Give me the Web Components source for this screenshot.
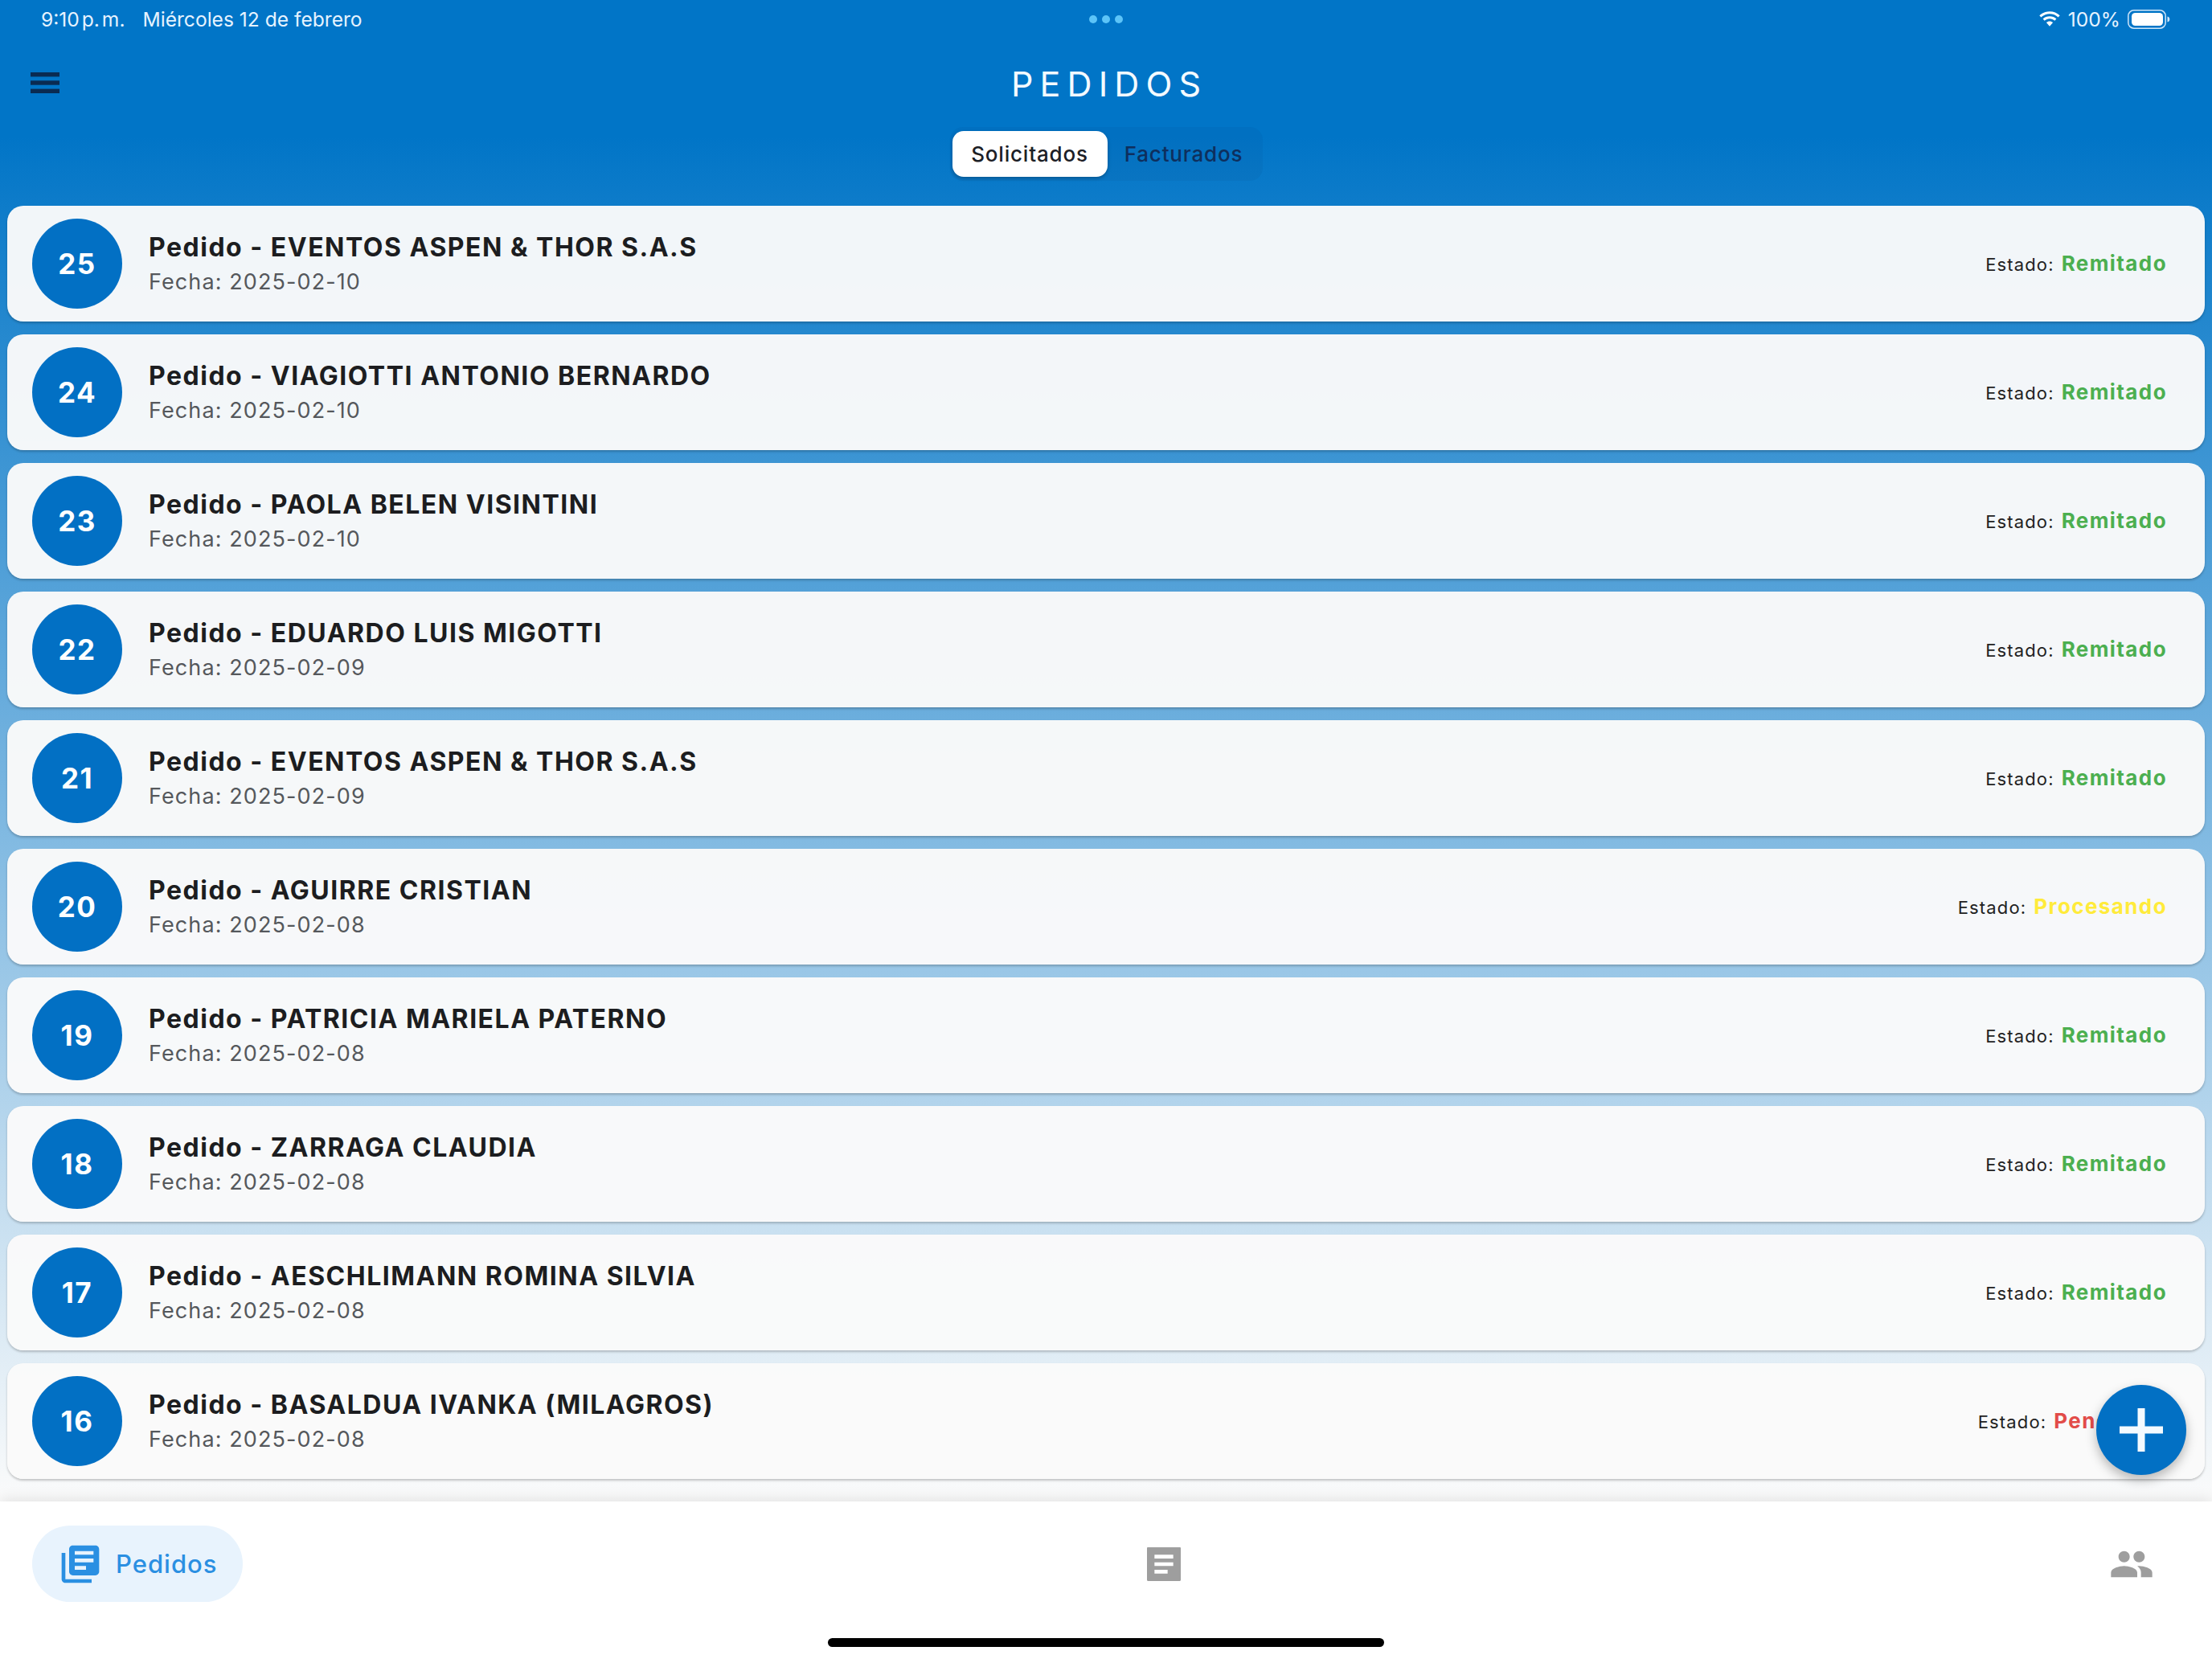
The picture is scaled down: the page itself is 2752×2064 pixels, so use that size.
<!DOCTYPE html>
<html lang="es">
<head>
<meta charset="utf-8">
<title>Pedidos</title>
<style>
html,body{margin:0;padding:0;width:2752px;height:2064px;overflow:hidden;font-family:Inter,Roboto,sans-serif}
</style>
</head>
<body>
<app-shell>
  <status-bar slot="top" time="9:10 p. m." date="Miércoles 12 de febrero" level="100%"></status-bar>
  <app-header slot="top" title="PEDIDOS"></app-header>
  <segmented-control slot="top">
    <seg-item active>Solicitados</seg-item>
    <seg-item>Facturados</seg-item>
  </segmented-control>
  <order-card num="25" name="EVENTOS ASPEN &amp; THOR S.A.S" date="2025-02-10" state="Remitado"></order-card>
  <order-card num="24" name="VIAGIOTTI ANTONIO BERNARDO" date="2025-02-10" state="Remitado"></order-card>
  <order-card num="23" name="PAOLA BELEN VISINTINI" date="2025-02-10" state="Remitado"></order-card>
  <order-card num="22" name="EDUARDO LUIS MIGOTTI" date="2025-02-09" state="Remitado"></order-card>
  <order-card num="21" name="EVENTOS ASPEN &amp; THOR S.A.S" date="2025-02-09" state="Remitado"></order-card>
  <order-card num="20" name="AGUIRRE CRISTIAN" date="2025-02-08" state="Procesando"></order-card>
  <order-card num="19" name="PATRICIA MARIELA PATERNO" date="2025-02-08" state="Remitado"></order-card>
  <order-card num="18" name="ZARRAGA CLAUDIA" date="2025-02-08" state="Remitado"></order-card>
  <order-card num="17" name="AESCHLIMANN ROMINA SILVIA" date="2025-02-08" state="Remitado"></order-card>
  <order-card num="16" name="BASALDUA IVANKA (MILAGROS)" date="2025-02-08" state="Pendiente"></order-card>
  <fab-button slot="fab"></fab-button>
  <bottom-nav slot="nav"></bottom-nav>
</app-shell>
<script>
function def(name, html){
  customElements.define(name, class extends HTMLElement{
    connectedCallback(){
      if(this.shadowRoot) return;
      const r=this.attachShadow({mode:'open'});
      r.innerHTML=typeof html==='function'?html(this):html;
    }
  });
}
const esc=s=>(s||'').replace(/&/g,'&amp;').replace(/</g,'&lt;');

def('app-shell',`<style>
:host{display:grid;grid-template-rows:auto 1fr auto;position:relative;width:2752px;height:2064px;overflow:hidden;
 background:linear-gradient(180deg,#0175c7 0,#0175c7 170px,#fbfbfb 1868px)}
.list{display:flex;flex-direction:column;gap:16px;padding:0 9px;min-height:0}
.fab{position:absolute;left:2608px;top:1723px;z-index:3}
</style>
<div><slot name="top"></slot></div>
<div class="list"><slot></slot></div>
<slot name="nav"></slot>
<div class="fab"><slot name="fab"></slot></div>`);

def('status-bar',h=>`<style>
:host{display:grid;grid-template-columns:1fr auto 1fr;align-items:center;height:48px;padding:0 52px 0 51px;color:#e6f3ff;
 font:400 24.600px/1 Inter,Roboto,sans-serif}
.l{display:flex;gap:22px}
.d{display:flex;gap:6px}.d i{width:10px;height:10px;border-radius:50%;background:#5cc4f8}
.r{display:flex;justify-content:flex-end;align-items:center;gap:9px}
svg{display:block}
.time{word-spacing:-4px}
</style>
<div class="l"><span class="time">${esc(h.getAttribute('time'))}</span><span>${esc(h.getAttribute('date'))}</span></div>
<div class="d"><i></i><i></i><i></i></div>
<div class="r">
<svg width="28" height="20" viewBox="0 0 28 20" fill="#fff"><path d="M14 3.2c4.1 0 7.8 1.6 10.6 4.2l2.1-2.2C23.4 2.100 18.900.2 14 .2S4.600 2.100 1.300 5.200l2.100 2.200C6.200 4.800 9.900 3.200 14 3.200z"/><path d="M14 9.300c2.400 0 4.600.9 6.300 2.400l2.100-2.200C20.200 7.500 17.200 6.300 14 6.300s-6.200 1.200-8.400 3.200l2.100 2.200c1.700-1.500 3.900-2.400 6.300-2.400z"/><path d="M14 12.500c-1.600 0-3 .6-4.100 1.600L14 18.800l4.100-4.700c-1.100-1-2.500-1.600-4.100-1.600z"/></svg>
<span>${esc(h.getAttribute('level'))}</span>
<svg width="53" height="24" viewBox="0 0 53 24"><rect x=".8" y=".8" width="46.400" height="22.400" rx="7" fill="none" stroke="#cfe6fa" stroke-width="1.500"/><rect x="5" y="4" width="39" height="16" rx="4.500" fill="#fff"/><path d="M49.500 8.500c2 .5 2.800 1.800 2.800 3.500s-.8 3-2.800 3.500z" fill="#cfe6fa"/></svg>
</div>`);

def('app-header',h=>`<style>
:host{display:grid;grid-template-columns:1fr auto 1fr;align-items:center;height:110px;padding:0 38px;color:#f4faff}
svg{display:block}
h1{margin:0;font:400 43px/1 Inter,sans-serif;letter-spacing:8.100px;margin-right:-8.100px;padding-top:3px}
</style>
<svg width="36" height="26" viewBox="0 0 36 26" fill="#0a2b52"><rect width="36" height="5.400" y="0"/><rect width="36" height="5.400" y="10.300"/><rect width="36" height="5.400" y="20.600"/></svg>
<h1>${esc(h.getAttribute('title'))}</h1>
<span></span>`);

def('segmented-control',`<style>
:host{display:flex;justify-content:center;padding:0 0 31px 0}
.c{display:flex;width:389px;height:67px;box-sizing:border-box;padding:5px 3px;border-radius:16px;background:rgba(20,60,120,.07)}
</style><div class="c"><slot></slot></div>`);

customElements.define('seg-item',class extends HTMLElement{
  connectedCallback(){
    const a=this.hasAttribute('active');
    this.attachShadow({mode:'open'}).innerHTML=`<style>
:host{display:flex;align-items:center;justify-content:center;flex:${a?'0 0 193px':'1'};border-radius:14px;box-sizing:border-box;padding-top:1px;
 font:500 26px/1 Inter,sans-serif;letter-spacing:.8px;
 color:${a?'#1c2026':'#0e2f5d'};background:${a?'#fff':'transparent'};
 ${a?'box-shadow:0 2px 4px rgba(0,0,0,.25);':''}}
</style><slot></slot>`;
  }
});

def('order-card',h=>{
  const s=h.getAttribute('state');
  const col={Remitado:'#4caf50',Procesando:'#ffeb3b',Pendiente:'#e24c48'}[s];
  return `<style>
:host{display:flex;align-items:center;height:144px;flex:none;box-sizing:border-box;padding:0 47px 0 31px;border-radius:20px;
 background:rgba(250,250,250,.97);box-shadow:0 2px 3px rgba(0,0,0,.22)}
.n{flex:none;width:112px;height:112px;border-radius:50%;background:#0270c4;color:#fff;display:flex;align-items:center;justify-content:center;
 font:700 35px/1 Inter,sans-serif;letter-spacing:1.500px;box-sizing:border-box}
.t{flex:1;margin-left:33px;min-width:0;padding-top:1px}
.a{font:650 32px/40px Inter,sans-serif;letter-spacing:1.500px;color:#1c1d20}
.b{font:400 27px/38px Inter,sans-serif;letter-spacing:1.100px;color:#55585c;margin-top:4px}
.e{flex:none;display:flex;align-items:baseline;gap:9px}
.k{font:400 22px/1 Inter,sans-serif;letter-spacing:1.150px;color:#222}
.v{font:700 26px/1 Inter,sans-serif;letter-spacing:1.400px;color:${col}}
</style>
<div class="n">${esc(h.getAttribute('num'))}</div>
<div class="t"><div class="a">Pedido - ${esc(h.getAttribute('name'))}</div><div class="b">Fecha: ${esc(h.getAttribute('date'))}</div></div>
<div class="e"><span class="k">Estado:</span><span class="v">${esc(s)}</span></div>`;
});

def('fab-button',`<style>
:host{display:flex;align-items:center;justify-content:center;width:112px;height:112px;border-radius:50%;background:#0270c4;
 box-shadow:0 6px 14px rgba(0,0,0,.28)}
svg{display:block}
</style><svg width="54" height="54" viewBox="0 0 54 54" fill="#f4faff"><rect x="22.500" y="0" width="9" height="54"/><rect y="22.500" x="0" width="54" height="9"/></svg>`);

def('bottom-nav',`<style>
:host{display:flex;align-items:flex-start;position:relative;height:196px;box-sizing:border-box;padding:30px 72px 0 40px;background:#fff;
 box-shadow:0 -3px 16px rgba(0,0,0,.10);z-index:2}
.pill{display:flex;align-items:center;gap:16px;height:95px;box-sizing:border-box;padding:0 32px;border-radius:48px;background:#e8f3fd;
 color:#2a8fe2;font:500 31px/1 Inter,sans-serif;letter-spacing:1px}
.mid{margin-left:1118px;padding-top:20px}
.end{margin-left:auto;padding-top:20px}
svg{display:block}
.bar{position:absolute;left:1030px;top:170px;width:692px;height:11px;border-radius:6px;background:#000}
</style>
<div class="pill"><svg width="56" height="56" viewBox="0 0 24 24" fill="#2a8fe2"><path d="M4 6H2v14c0 1.100.9 2 2 2h14v-2H4V6zm16-4H8c-1.100 0-2 .9-2 2v12c0 1.100.9 2 2 2h12c1.100 0 2-.9 2-2V4c0-1.100-.9-2-2-2zm-1 9H9V9h10v2zm-4 4H9v-2h6v2zm4-8H9V5h10v2z"/></svg><span>Pedidos</span></div>
<div class="mid"><svg width="56" height="56" viewBox="0 0 24 24" fill="#9e9e9e"><path d="M20.500 3h-17c-.3 0-.5.2-.5.5v17c0 .3.2.5.5.5h17c.3 0 .5-.2.5-.5v-17c0-.3-.2-.5-.5-.5zM14 17H7v-2h7v2zm3-4H7v-2h10v2zm0-4H7V7h10v2z"/></svg></div>
<div class="end"><svg width="56" height="56" viewBox="0 0 24 24" fill="#9e9e9e"><path d="M16 11c1.660 0 2.990-1.340 2.990-3S17.660 5 16 5c-1.660 0-3 1.340-3 3s1.340 3 3 3zm-8 0c1.660 0 2.990-1.340 2.990-3S9.660 5 8 5C6.340 5 5 6.340 5 8s1.340 3 3 3zm0 2c-2.330 0-7 1.170-7 3.500V19h14v-2.500c0-2.330-4.670-3.500-7-3.500zm8 0c-.29 0-.62.02-.97.05 1.160.84 1.970 1.970 1.970 3.450V19h6v-2.500c0-2.330-4.670-3.500-7-3.500z"/></svg></div>
<div class="bar"></div>`);
</script>
</body>
</html>
